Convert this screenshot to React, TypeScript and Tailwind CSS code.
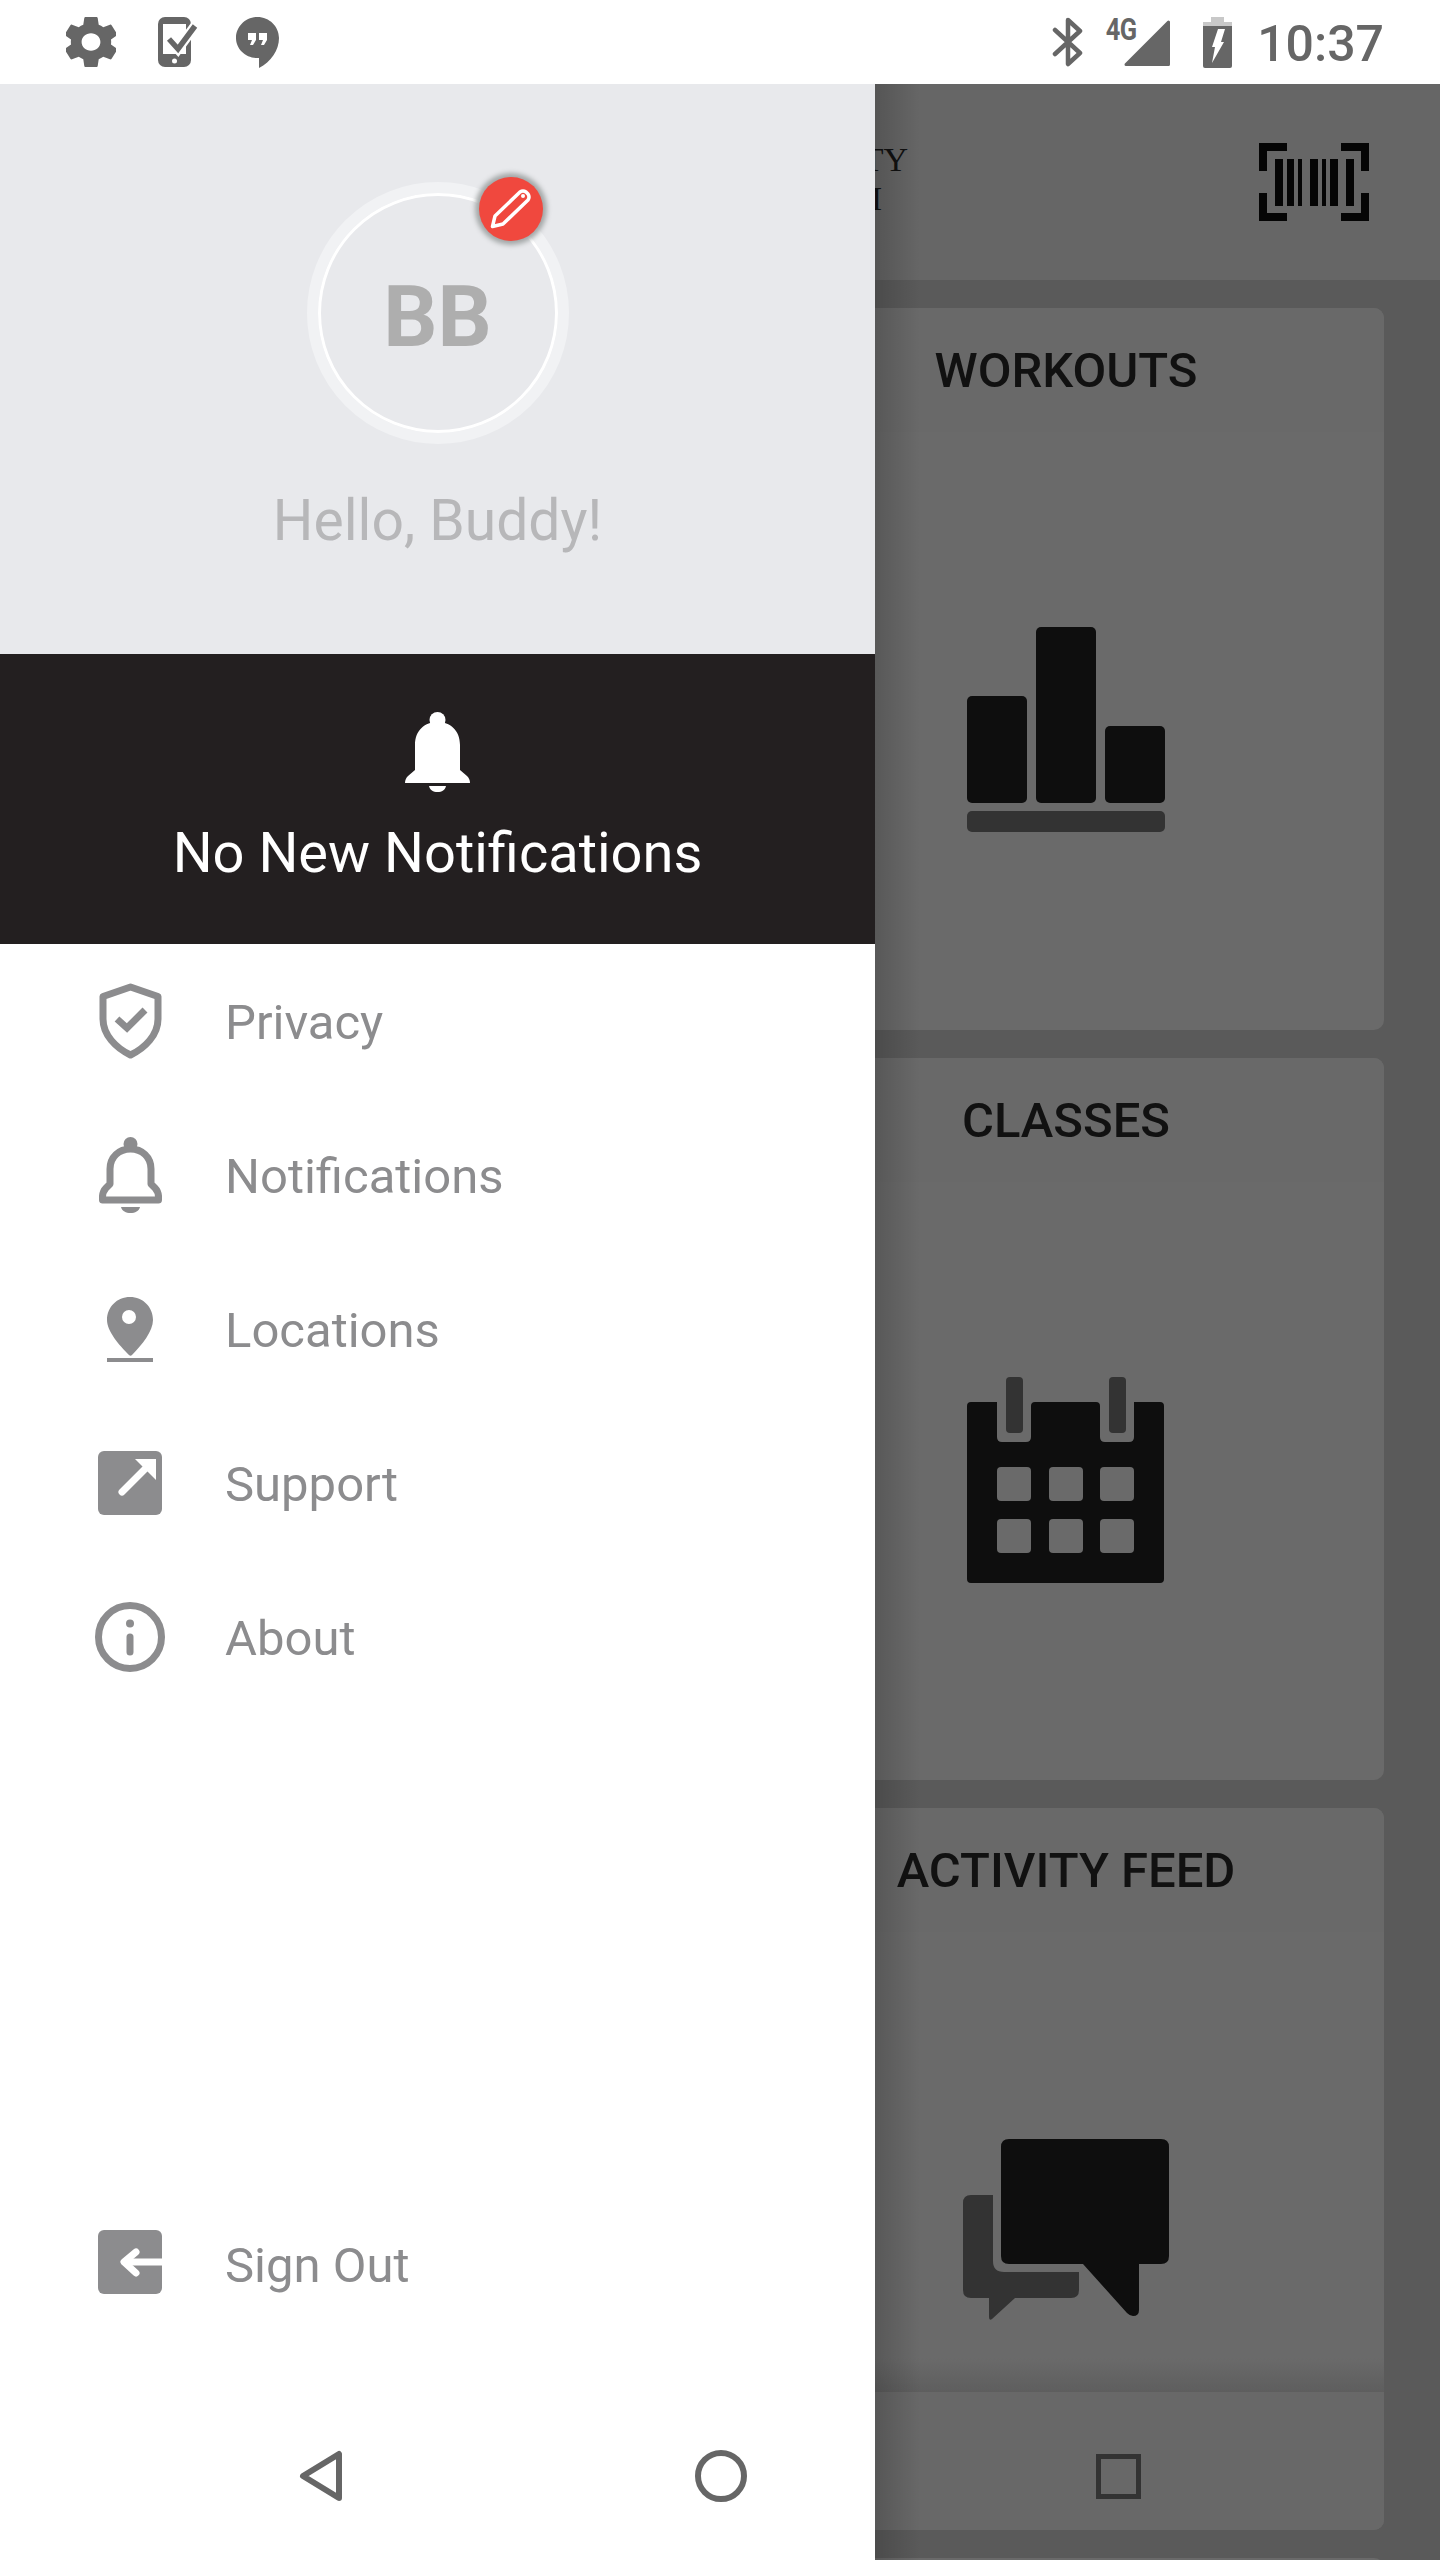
import type { ReactNode } from "react";

const GRAY = "#8c8c8e";

const ShieldIcon = () => (
  <svg width="63" height="76" viewBox="0 0 63 76" fill="none" stroke={GRAY}>
    <path d="M31.5 4 59 13.500V36C59 52 46 65 31.500 72 17 65 4 52 4 36V13.500Z" strokeWidth="7" strokeLinejoin="round" />
    <path d="M18 36 28 45 46 27" strokeWidth="7" />
  </svg>
);

const BellOutlineIcon = () => (
  <svg width="63" height="76" viewBox="0 0 63 76" fill="none">
    <circle cx="31.5" cy="7" r="7" fill={GRAY} />
    <path
      d="M11 47V32C11 20 20 12 31.500 12 43 12 52 20 52 32V47L56 51C59 54 60 57 59.500 63H3.500C3 57 4 54 7 51Z"
      stroke={GRAY}
      strokeWidth="7"
      strokeLinejoin="round"
    />
    <path d="M22 70H41C40 74 36 76 31.500 76 27 76 23 74 22 70Z" fill={GRAY} />
  </svg>
);

const PinIcon = () => (
  <svg width="46" height="65" viewBox="0 0 46 65" fill={GRAY}>
    <path
      fillRule="evenodd"
      d="M23 0C10 0 0 10 0 23 0 34 12 48 22 58 23 59 24 59 25 58 35 48 46 34 46 23 46 10 36 0 23 0ZM22 13A7 7 0 1 1 22 27 7 7 0 1 1 22 13Z"
    />
    <rect x="0" y="61" width="46" height="4" />
  </svg>
);

const SupportIcon = () => (
  <svg width="64" height="64" viewBox="0 0 64 64">
    <rect width="64" height="64" rx="6" fill={GRAY} />
    <path d="M24 41 50 15" stroke="#fff" strokeWidth="7" strokeLinecap="round" />
    <path d="M37 8H58V29Z" fill="#fff" />
  </svg>
);

const InfoIcon = () => (
  <svg width="70" height="70" viewBox="0 0 70 70" fill="none">
    <circle cx="35" cy="35" r="31.5" stroke={GRAY} strokeWidth="7" />
    <circle cx="35" cy="21.500" r="4" fill={GRAY} />
    <path d="M35 35V50" stroke={GRAY} strokeWidth="7" strokeLinecap="round" />
  </svg>
);

const SignOutIcon = () => (
  <svg width="64" height="64" viewBox="0 0 64 64" fill="none" className="-translate-y-[2px]">
    <rect width="64" height="64" rx="6" fill={GRAY} />
    <path d="M26 32H64" stroke="#fff" strokeWidth="7" />
    <path d="M38 22 26 32 38 43" stroke="#fff" strokeWidth="7" strokeLinecap="round" strokeLinejoin="round" />
  </svg>
);

const MENU = [
  { name: "Privacy", icon: <ShieldIcon /> },
  { name: "Notifications", icon: <BellOutlineIcon /> },
  { name: "Locations", icon: <PinIcon /> },
  { name: "Support", icon: <SupportIcon /> },
  { name: "About", icon: <InfoIcon /> },
];

const MenuRow = ({ name, icon }: { name: string; icon: ReactNode }) => (
  <div className="h-[154px] flex items-center pl-[94px]">
    <div className="w-[72px] flex justify-center items-center">{icon}</div>
    <span className="ml-[59px] pt-[4px] text-[49px] text-[#8c8c8e]">{name}</span>
  </div>
);

const StatusBar = () => (
  <div className="h-[84px] bg-white flex items-center justify-between pl-[66px] pr-[56px]">
    <div className="flex items-center gap-[42px]">
      <svg width="50" height="50" viewBox="2.7 2 18.6 20" preserveAspectRatio="none" fill="#666">
        <path d="M19.430 12.980c.04-.32.07-.64.07-.98s-.03-.66-.07-.98l2.110-1.650c.19-.15.24-.42.12-.64l-2-3.460c-.12-.22-.39-.3-.61-.22l-2.490 1c-.52-.4-1.080-.73-1.690-.98l-.38-2.650C14.460 2.180 14.250 2 14 2h-4c-.25 0-.46.18-.49.42l-.38 2.650c-.61.25-1.170.59-1.690.98l-2.490-1c-.23-.09-.49 0-.61.22l-2 3.460c-.13.22-.07.49.12.64l2.110 1.650c-.04.32-.07.65-.07.98s.03.66.07.98l-2.110 1.650c-.19.15-.24.42-.12.64l2 3.460c.12.22.39.3.61.22l2.490-1c.52.4 1.080.73 1.690.98l.38 2.650c.03.24.24.42.49.42h4c.25 0 .46-.18.49-.42l.38-2.650c.61-.25 1.170-.59 1.690-.98l2.490 1c.23.09.49 0 .61-.22l2-3.460c.12-.22.07-.49-.12-.64l-2.110-1.650zM12 15.500c-1.930 0-3.500-1.570-3.500-3.500s1.570-3.500 3.500-3.500 3.500 1.570 3.500 3.500-1.570 3.500-3.500 3.500z" />
      </svg>
      <svg width="40" height="50" viewBox="0 0 40 50">
        <rect width="33" height="50" rx="7" fill="#666" />
        <rect x="5" y="7" width="23" height="30" fill="#fff" />
        <circle cx="16.500" cy="44" r="2.500" fill="#fff" />
        <path d="M11 22 20 32 37 9" fill="none" stroke="#fff" strokeWidth="10" />
        <path d="M11 22 20 32 37 9" fill="none" stroke="#666" strokeWidth="5.500" />
      </svg>
      <svg width="43" height="51" viewBox="0 0 43 51" fill="#666" className="-ml-[4px]">
        <path d="M21.500 0C9.600 0 0 9.600 0 21 0 32 9.600 41 21 41H23V51C35 45 43 33 43 21 43 9.600 33.400 0 21.500 0Z" />
        <path d="M12 16H20V23L17 28H14L16 23H12ZM23 16H31V23L28 28H25L27 23H23Z" fill="#fff" />
      </svg>
    </div>
    <div className="flex items-center">
      <svg width="31" height="50" viewBox="0 0 31 50" fill="none">
        <path d="M3 13 28 36 16 47V3L28 14 3 37" stroke="#666" strokeWidth="4.500" strokeLinejoin="round" strokeLinecap="round" />
      </svg>
      <div className="ml-[22px] w-[66px] h-[50px] flex">
        <span className="w-[32px] h-[24px] flex justify-center items-center text-[31px] leading-none font-bold text-[#666] scale-x-[.82] -tracking-[1px]">
          4G
        </span>
        <svg width="47" height="47" viewBox="0 0 47 47" fill="#666" className="-ml-[13px] mt-[3px]">
          <path d="M44.500 2V44.500H2Z" stroke="#666" strokeWidth="3" strokeLinejoin="round" />
        </svg>
      </div>
      <svg width="29" height="51" viewBox="0 0 29 51" className="ml-[32px]">
        <rect x="8" width="13" height="6" fill="#c8c8c8" />
        <rect y="5" width="29" height="46" rx="2" fill="#666" />
        <rect y="5" width="29" height="4" fill="#c8c8c8" />
        <path d="M15 12H22L18 25H21L9 46 12 30H9Z" fill="#fff" />
      </svg>
      <span className="ml-[25px] pt-[3px] text-[50px] leading-none text-[#666] font-medium">10:37</span>
    </div>
  </div>
);

const ChartIcon = () => (
  <svg width="198" height="205" viewBox="0 0 198 205" fill="#0e0e0e">
    <rect y="69" width="60" height="107" rx="5" />
    <rect x="69" width="60" height="176" rx="5" />
    <rect x="138" y="99" width="60" height="77" rx="5" />
    <rect y="184" width="198" height="21" rx="5" fill="#333" />
  </svg>
);

const CALENDAR_CELLS = [
  [30, 90],
  [82, 90],
  [133, 90],
  [30, 142],
  [82, 142],
  [133, 142],
];

const CalendarIcon = () => (
  <svg width="198" height="206" viewBox="0 0 198 206" fill="#0e0e0e">
    <path d="M4 25H30V60Q30 65 35 65H59Q64 65 64 60V29Q64 25 68 25H129Q133 25 133 29V60Q133 65 138 65H162Q167 65 167 60V25H193Q197 25 197 29V202Q197 206 193 206H4Q0 206 0 202V29Q0 25 4 25Z" />
    <rect x="39" width="17" height="56" rx="4" fill="#333" />
    <rect x="142" width="17" height="56" rx="4" fill="#333" />
    {CALENDAR_CELLS.map(([x, y]) => (
      <rect key={`${x}-${y}`} x={x} y={y} width="34" height="34" rx="4" fill="#6a6a6a" />
    ))}
  </svg>
);

const ChatIcon = () => (
  <svg width="206" height="181" viewBox="0 0 206 181" className="mt-[12px]">
    <path d="M8 56H30V122Q30 133 41 133H116V151Q116 159 108 159H52L29 180Q26 182 26 178V159H8Q0 159 0 151V64Q0 56 8 56Z" fill="#333" />
    <path d="M46 0H198Q206 0 206 8V117Q206 125 198 125H176V171Q176 177 170 177 167 177 164 174L120 125H46Q38 125 38 117V8Q38 0 46 0Z" fill="#0e0e0e" />
  </svg>
);

const CARDS = [
  { title: "WORKOUTS", icon: <ChartIcon /> },
  { title: "CLASSES", icon: <CalendarIcon /> },
  { title: "ACTIVITY FEED", icon: <ChatIcon /> },
];

const Card = ({ title, icon, children }: { title: string; icon: ReactNode; children?: ReactNode }) => (
  <div className="relative h-[722px] shrink-0 rounded-[10px] bg-[#6a6a6a] flex flex-col items-center overflow-hidden">
    <div className="h-[124px] w-full shrink-0 flex justify-center items-center bg-[#696969] pt-[2px] text-[49px] font-medium text-[#111]">
      {title}
    </div>
    <div className="mt-[195px]">{icon}</div>
    {children}
  </div>
);

const BackgroundScreen = () => (
  <div className="relative flex-1 flex flex-col bg-[#5a5a5a]">
    <div className="h-[196px] shrink-0 bg-[#666] flex items-center justify-between pr-[71px]">
      <div className="-ml-[120px] w-[153px] mb-[6px] font-['Liberation_Serif',serif] text-[34px] leading-[39px] text-[#111] text-right">
        <div>CITY</div>
        <div className="pr-[26px]">GYM</div>
      </div>
      <svg width="110" height="78" viewBox="0 0 110 78" fill="#050505">
        <path d="M0 0H28V8H8V28H0ZM82 0H110V28H102V8H82ZM0 50H8V70H28V78H0ZM102 50H110V78H82V70H102Z" />
        <path d="M16 16H24V63H16ZM28 16H35V63H28ZM39 16H43V63H39ZM51 16H59V63H51ZM63 16H67V63H63ZM71 16H79V63H71ZM87 16H95V63H87Z" />
      </svg>
    </div>
    <div className="-ml-[127px] mr-[56px] mt-[28px] flex flex-col gap-[28px]">
      {CARDS.map((card, i) => (
        <Card key={card.title} title={card.title} icon={card.icon}>
          {i === 2 && (
            <div className="absolute inset-x-0 bottom-0 flex flex-col">
              <div className="h-[34px] bg-gradient-to-b from-transparent to-[#5e5e5e]" />
              <div className="h-[138px] bg-[#686868] flex justify-center items-center pt-[30px] pl-[104px]">
                <div className="w-[45px] h-[45px] border-[5px] border-[#333]" />
              </div>
            </div>
          )}
        </Card>
      ))}
      <div className="h-[722px] shrink-0 rounded-[10px] bg-[#6a6a6a]" />
    </div>
    <div className="absolute left-0 inset-y-0 w-[45px] bg-gradient-to-r from-black/[.17] to-transparent" />
  </div>
);

const Drawer = () => (
  <div className="relative z-10 w-[875px] shrink-0 bg-white flex flex-col">
    <div className="h-[570px] bg-[#e8e9ec] flex flex-col items-center pt-[98px]">
      <div className="relative w-[262px] h-[262px] rounded-full border-[11px] border-[#f1f2f4]">
        <div className="w-full h-full rounded-full border-[3px] border-white flex justify-center items-center pt-[8px]">
          <span className="text-[85px] font-bold text-[#aeaeae] leading-none">BB</span>
        </div>
        <div className="absolute -top-[16px] right-[15px] w-[64px] h-[64px] rounded-full bg-[#f0483e] shadow-[0_0_5px_4px_#a3a7a7] flex justify-center items-center">
          <svg width="64" height="64" viewBox="0 0 64 64" fill="none">
            <path
              d="M13.500 49.500 16 39 41 15Q44 13 47 15L49 17Q51 20 49 23L24 47Z"
              stroke="#fff"
              strokeWidth="3.500"
              strokeLinejoin="round"
            />
            <circle cx="44" cy="19" r="2" fill="#fff" />
          </svg>
        </div>
      </div>
      <span className="mt-[45px] text-[57px] leading-[64px] text-[#b7b7b9]">Hello, Buddy!</span>
    </div>
    <div className="h-[290px] bg-[#231f20] flex flex-col items-center pt-[58px]">
      <svg width="65" height="80" viewBox="0 0 65 80" fill="#fff">
        <circle cx="32.5" cy="8" r="8" />
        <path d="M10 58V33C10 18 20 10 32.500 10 45 10 55 18 55 33V58L62 64C64 66 65 68 65 71H0C0 68 1 66 3 64Z" />
        <path d="M24 74H41C40 78 37 80 32.500 80 28 80 25 78 24 74Z" />
      </svg>
      <span className="mt-[27px] text-[56px] leading-[68px] text-white">No New Notifications</span>
    </div>
    <div className="flex-1 flex flex-col">
      {MENU.map((item) => (
        <MenuRow key={item.name} name={item.name} icon={item.icon} />
      ))}
    </div>
    <div className="mb-[51px]">
      <MenuRow name="Sign Out" icon={<SignOutIcon />} />
    </div>
    <div className="h-[168px] shrink-0 flex items-center pl-[299px] gap-[352px]">
      <svg width="44" height="52" viewBox="0 0 44 52" fill="none">
        <path d="M40 4V48L4 26Z" stroke="#666" strokeWidth="6" strokeLinejoin="round" />
      </svg>
      <svg width="52" height="52" viewBox="0 0 52 52" fill="none">
        <circle cx="26" cy="26" r="23" stroke="#666" strokeWidth="6" />
      </svg>
    </div>
  </div>
);

const App = () => {
  return (
    <div className="w-[1440px] h-[2560px] flex flex-col overflow-hidden font-['Roboto',sans-serif]">
      <StatusBar />
      <div className="flex-1 min-h-0 flex overflow-hidden">
        <Drawer />
        <BackgroundScreen />
      </div>
    </div>
  );
};

export default App;
